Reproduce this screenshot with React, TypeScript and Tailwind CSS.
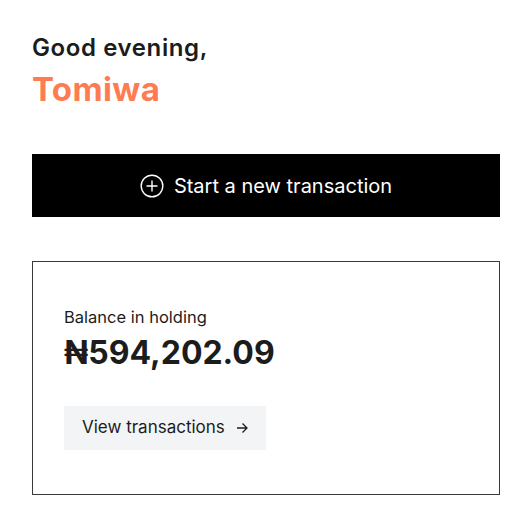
import React from "react";

export default function App() {
  return (
    <div className="w-[532px] h-[532px] bg-white px-8 pt-[32px]" style={{ fontFamily: "Inter, 'Noto Sans', sans-serif" }}>
      <h1 className="text-[24px] leading-[32px] font-semibold text-[#1c1c1c] tracking-[0.6px]">Good evening,</h1>
      <h2 className="text-[33px] leading-[40px] font-bold text-[#ff7b52] mt-[5px] tracking-[0.4px]">Tomiwa</h2>
      <button className="mt-[45px] w-full h-[63px] bg-black text-white flex items-center justify-center gap-[10px] text-[20px]">
        <svg width="24" height="24" viewBox="0 0 24 24" fill="none" stroke="white" strokeWidth="1.4">
          <circle cx="12" cy="12" r="10.8" />
          <path d="M12 6.5v11M6.5 12h11" />
        </svg>
        <span>Start a new transaction</span>
      </button>
      <div className="mt-[44px] w-full h-[234px] border border-[#3a3a3a] px-[31px] pt-[44px]">
        <div className="text-[16.5px] leading-[22px] text-[#1c1c1c]">Balance in holding</div>
        <div className="text-[32px] leading-[38px] font-bold text-[#1c1c1c] mt-[6px] tracking-[0px]">₦594,202.09</div>
        <button className="mt-[34px] h-[44px] pl-[18px] pr-[18px] bg-[#f3f4f6] flex items-center gap-[11px] text-[17px] text-[#1c1c1c]">
          <span>View transactions</span>
          <svg width="12" height="12" viewBox="0 0 12 12" fill="none" stroke="#1c1c1c" strokeWidth="1.3">
            <path d="M1 6h10M6.5 1.5 11 6l-4.5 4.5" />
          </svg>
        </button>
      </div>
    </div>
  );
}
